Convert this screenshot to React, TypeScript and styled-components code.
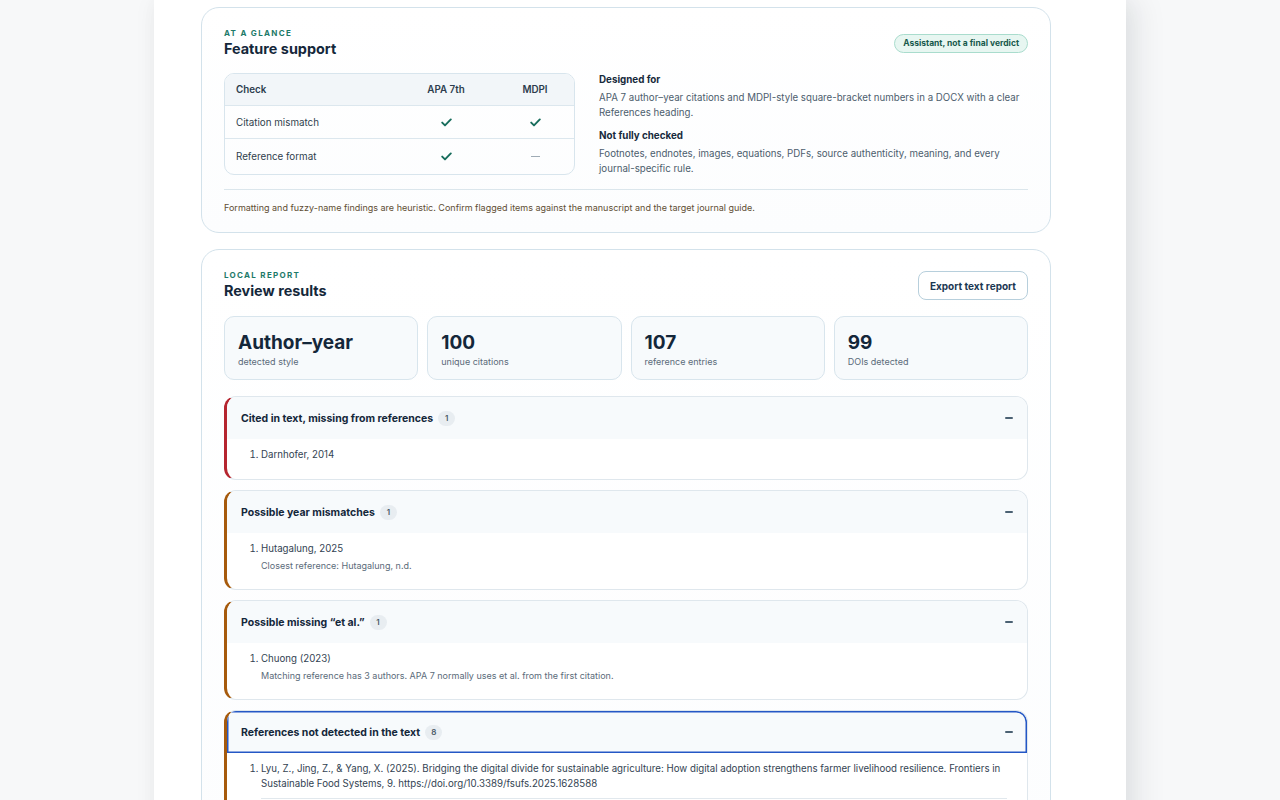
import styled, {createGlobalStyle} from "styled-components";

const GlobalStyle = createGlobalStyle`
    html, body {
        margin: 0;
        padding: 0;
        background: #f7f8f9;
        font-family: Inter, "Noto Sans", "Liberation Sans", sans-serif;
        color: #14273a;
        -webkit-font-smoothing: antialiased;
    }
    * {
        box-sizing: border-box;
    }
`

const Page = styled.div`
    height: 800px;
    overflow: hidden;
`

const Column = styled.main`
    width: 972px;
    min-height: 800px;
    margin-left: 154px;
    background: #fff;
    box-shadow: 0 0 22px rgba(20, 30, 40, 0.05), 14px 0 28px rgba(20, 30, 40, 0.07);
    padding: 7px 0 0 47px;
    display: flex;
    flex-direction: column;
    gap: 16px;
`

const Card = styled.section`
    width: 850px;
    border: 1px solid #d3e2eb;
    border-radius: 18px;
    background: linear-gradient(180deg, #fff 0%, #fcfdfe 100%);
    padding: 19px 22px 18px 22px;
`

const CardHead = styled.div`
    display: flex;
    justify-content: space-between;
    align-items: flex-start;
`

const Eyebrow = styled.div`
    font-size: 8px;
    font-weight: 700;
    letter-spacing: 1.3px;
    text-transform: uppercase;
    color: #1d7a69;
    line-height: 12px;
`

const Title = styled.h2`
    margin: 0;
    font-size: 14.4px;
    font-weight: 700;
    line-height: 20px;
    color: #14273a;
`

const Badge = styled.span`
    margin-top: 7px;
    padding: 3px 8px;
    border-radius: 999px;
    background: #e7f6f1;
    border: 1px solid #a9dccd;
    color: #18594c;
    font-size: 8.5px;
    font-weight: 700;
    line-height: 11px;
`

const Glance = styled.div`
    display: grid;
    grid-template-columns: 351px 1fr;
    gap: 24px;
    margin-top: 14px;
    padding-bottom: 13px;
    border-bottom: 1px solid #dbe6ec;
`

const Table = styled.div`
    border: 1px solid #d8e5ed;
    border-radius: 10px;
    overflow: hidden;
    align-self: start;
`

const Row = styled.div<{ $head?: boolean }>`
    display: grid;
    grid-template-columns: 1fr 100px 78px;
    align-items: center;
    height: ${p => p.$head ? 31 : 33}px;
    padding-left: 11px;
    font-size: 9.8px;
    font-weight: ${p => p.$head ? 600 : 400};
    color: ${p => p.$head ? "#2c3d4d" : "#2f3e4c"};
    background: ${p => p.$head ? "#f2f6f9" : "transparent"};

    & + & {
        border-top: 1px solid #dce7ee;
    }

    &:last-child {
        height: 36px;
    }
`

const Cell = styled.span`
    display: flex;
    justify-content: center;
    align-items: center;
`

const Dash = styled.span`
    width: 9px;
    height: 1px;
    background: #9fabb5;
`

const Notes = styled.div`
    padding-top: 0;
`

const NoteTitle = styled.div`
    font-size: 9.8px;
    font-weight: 700;
    color: #172a3c;
    line-height: 14px;
`

const NoteText = styled.p`
    margin: 3px 0 9px;
    font-size: 9.7px;
    line-height: 15px;
    color: #4c5d6d;

    &:last-child {
        margin-bottom: 0;
    }
`

const Footnote = styled.p`
    margin: 12px 0 0;
    font-size: 9px;
    line-height: 12px;
    color: #5f4e34;
`

const Button = styled.button`
    margin-top: 2px;
    height: 29px;
    padding: 0 11px;
    border-radius: 8px;
    border: 1px solid #b7cfdc;
    background: #fff;
    color: #1b3853;
    font-family: inherit;
    font-size: 10px;
    font-weight: 700;
`

const Stats = styled.div`
    display: grid;
    grid-template-columns: repeat(4, 1fr);
    gap: 9px;
    margin-top: 15px;
`

const Stat = styled.div`
    height: 64px;
    border: 1px solid #d8e5ed;
    border-radius: 10px;
    background: #f7fafc;
    padding: 14px 13px 0;
`

const StatValue = styled.div`
    font-size: 19px;
    font-weight: 700;
    line-height: 24px;
    color: #14273a;
`

const StatLabel = styled.div`
    font-size: 9px;
    color: #5b6b7a;
    line-height: 12px;
    margin-top: 1px;
`

const Findings = styled.div`
    display: flex;
    flex-direction: column;
    gap: 10px;
    margin-top: 16px;
`

const Finding = styled.div<{ $tone: string }>`
    border: 1px solid #dfe7ed;
    border-left: 3px solid ${p => p.$tone};
    border-radius: 12px;
    overflow: hidden;
    background: #fff;
`

const FindingHead = styled.div<{ $focus?: boolean }>`
    display: flex;
    align-items: center;
    gap: 5px;
    height: 42px;
    padding: 0 14px;
    background: #f7fafc;
    font-size: 10.5px;
    font-weight: 700;
    color: #14273a;
    box-shadow: ${p => p.$focus ? "inset 0 0 0 1.5px #2457c5" : "none"};
    border-top-right-radius: 11px;
`

const Count = styled.span`
    min-width: 17px;
    height: 15px;
    padding: 0 5px;
    border-radius: 999px;
    background: #e8edf1;
    color: #4a5a68;
    font-size: 8px;
    font-weight: 600;
    display: inline-flex;
    align-items: center;
    justify-content: center;
`

const Toggle = styled.span`
    margin-left: auto;
    width: 8px;
    height: 1.6px;
    background: #4b6173;
    border-radius: 1px;
`

const Items = styled.ol`
    margin: 0;
    padding: 8px 20px 17px 34px;
    font-size: 9.7px;
    line-height: 15px;
    color: #334352;

    li + li {
        margin-top: 8px;
    }
`

const Item = styled.li<{ $rule?: boolean }>`
    padding-bottom: ${p => p.$rule ? 7 : 0}px;
    border-bottom: ${p => p.$rule ? "1px solid #e1e8ed" : "none"};
`

const Detail = styled.div`
    font-size: 9px;
    color: #5b6b7a;
    line-height: 13px;
    margin-top: 3px;
`

function Check() {
    return <svg width="11" height="9" viewBox="0 0 11 9" fill="none">
        <path d="M1.2 4.6 L4 7.4 L9.8 1.4" stroke="#176d5c" strokeWidth="1.9" strokeLinecap="round" strokeLinejoin="round"/>
    </svg>
}

type Entry = { text: string, detail?: string }

const findings: { title: string, tone: string, count: number, items: Entry[], focus?: boolean }[] = [
    {
        title: "Cited in text, missing from references",
        tone: "#b5252f",
        count: 1,
        items: [{text: "Darnhofer, 2014"}],
    },
    {
        title: "Possible year mismatches",
        tone: "#a65a0c",
        count: 1,
        items: [{text: "Hutagalung, 2025", detail: "Closest reference: Hutagalung, n.d."}],
    },
    {
        title: "Possible missing \u201cet al.\u201d",
        tone: "#a65a0c",
        count: 1,
        items: [{
            text: "Chuong (2023)",
            detail: "Matching reference has 3 authors. APA 7 normally uses et al. from the first citation.",
        }],
    },
    {
        title: "References not detected in the text",
        tone: "#a65a0c",
        count: 8,
        focus: true,
        items: [
            {text: "Lyu, Z., Jing, Z., & Yang, X. (2025). Bridging the digital divide for sustainable agriculture: How digital adoption strengthens farmer livelihood resilience. Frontiers in Sustainable Food Systems, 9. https://doi.org/10.3389/fsufs.2025.1628588"},
            {text: "Mwangi, M., & Kariuki, S. (2015). Factors determining adoption of new agricultural technology by smallholder farmers in developing countries. Journal of Economics and Sustainable Development, 6(5)."},
        ],
    },
]

const stats = [
    {value: "Author\u2013year", label: "detected style"},
    {value: "100", label: "unique citations"},
    {value: "107", label: "reference entries"},
    {value: "99", label: "DOIs detected"},
]

export default function App() {
    return <Page>
        <GlobalStyle/>
        <Column>
            <Card>
                <CardHead>
                    <div>
                        <Eyebrow>At a glance</Eyebrow>
                        <Title>Feature support</Title>
                    </div>
                    <Badge>Assistant, not a final verdict</Badge>
                </CardHead>
                <Glance>
                    <Table>
                        <Row $head>
                            <span>Check</span>
                            <Cell>APA 7th</Cell>
                            <Cell>MDPI</Cell>
                        </Row>
                        <Row>
                            <span>Citation mismatch</span>
                            <Cell><Check/></Cell>
                            <Cell><Check/></Cell>
                        </Row>
                        <Row>
                            <span>Reference format</span>
                            <Cell><Check/></Cell>
                            <Cell><Dash/></Cell>
                        </Row>
                    </Table>
                    <Notes>
                        <NoteTitle>Designed for</NoteTitle>
                        <NoteText>APA 7 author–year citations and MDPI-style square-bracket numbers in a DOCX with a clear References heading.</NoteText>
                        <NoteTitle>Not fully checked</NoteTitle>
                        <NoteText>Footnotes, endnotes, images, equations, PDFs, source authenticity, meaning, and every journal-specific rule.</NoteText>
                    </Notes>
                </Glance>
                <Footnote>Formatting and fuzzy-name findings are heuristic. Confirm flagged items against the manuscript and the target journal guide.</Footnote>
            </Card>

            <Card>
                <CardHead>
                    <div>
                        <Eyebrow>Local report</Eyebrow>
                        <Title>Review results</Title>
                    </div>
                    <Button>Export text report</Button>
                </CardHead>
                <Stats>
                    {stats.map(s => <Stat key={s.label}>
                        <StatValue>{s.value}</StatValue>
                        <StatLabel>{s.label}</StatLabel>
                    </Stat>)}
                </Stats>
                <Findings>
                    {findings.map(f => <Finding key={f.title} $tone={f.tone}>
                        <FindingHead $focus={f.focus}>
                            {f.title}
                            <Count>{f.count}</Count>
                            <Toggle/>
                        </FindingHead>
                        <Items>
                            {f.items.map((it, i) => <Item key={i} $rule={f.items.length > 1}>
                                {it.text}
                                {it.detail && <Detail>{it.detail}</Detail>}
                            </Item>)}
                        </Items>
                    </Finding>)}
                </Findings>
            </Card>
        </Column>
    </Page>
}
